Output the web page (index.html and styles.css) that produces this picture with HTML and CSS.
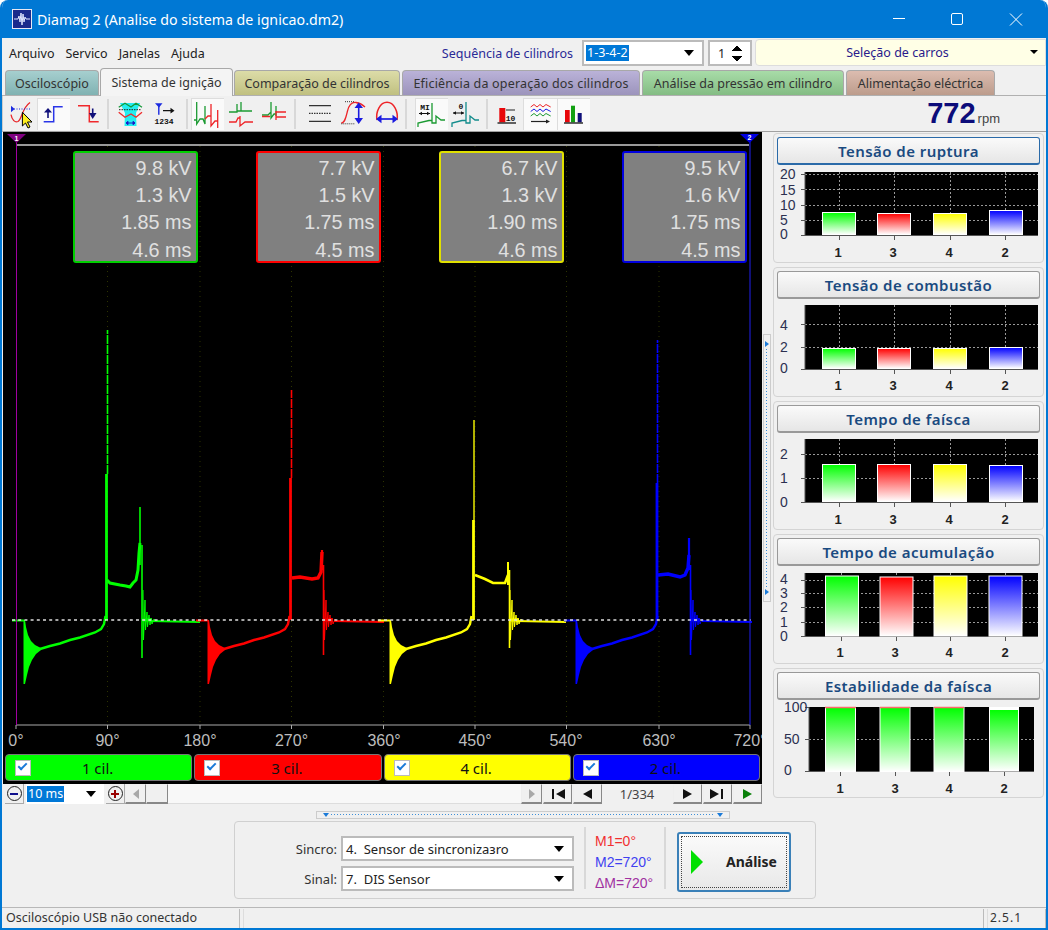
FILE: index.html
```html
<!DOCTYPE html>
<html>
<head>
  <title>Diamag 2</title>
  <link rel="stylesheet" href="styles.css">
</head>
<body>
<div class="window">
  <div class="titlebar">
    <svg class="app-icon" width="20" height="20" viewBox="0 0 20 20">
      <rect x="0.5" y="0.5" width="19" height="19" fill="#1a2a8c" stroke="#e8e8f4"/>
      <path d="M2 10H6L7 7L8 13L9 4L10 16L11 5L12 13L13 8L14 10H18" fill="none" stroke="#dfe6ff" stroke-width="1"/>
    </svg>
    <span class="title">Diamag 2 (Analise do sistema de ignicao.dm2)</span>
    <div class="win-btns">
      <svg width="58" height="38" viewBox="0 0 58 38"><path d="M22 18.5H34" stroke="#fff"/></svg>
      <svg width="58" height="38" viewBox="0 0 58 38"><rect x="22.5" y="13.5" width="11" height="11" rx="1.5" fill="none" stroke="#fff"/></svg>
      <svg width="58" height="38" viewBox="0 0 58 38"><path d="M23 13.5L35 25.5M35 13.5L23 25.5" stroke="#fff"/></svg>
    </div>
  </div>

  <div class="menubar">
    <span>Arquivo</span><span>Servico</span><span>Janelas</span><span>Ajuda</span>
    <span class="seq-label">Sequência de cilindros</span>
    <div class="field seq-field"><span class="sel">1-3-4-2</span><i class="caret"></i></div>
    <div class="field spin-field"><span>1</span><i class="spin-arrows"></i></div>
    <div class="car-select"><span>Seleção de carros</span><i class="caret small"></i></div>
  </div>

  <div class="tabs">
    <div class="tab t-scope">Osciloscópio</div>
    <div class="tab active">Sistema de ignição</div>
    <div class="tab t-compare">Comparação de cilindros</div>
    <div class="tab t-eff">Eficiência da operação dos cilindros</div>
    <div class="tab t-press">Análise da pressão em cilindro</div>
    <div class="tab t-power">Alimentação eléctrica</div>
  </div>

  <div class="toolbar">
    <div class="tb"><svg viewBox="0 0 30 30">
      <path d="M6 15.7C7 21 10 24 13 22.5C17 20 17 9 25 3.5" fill="none" stroke="#e8262a" stroke-width="1.3"/>
      <path d="M6 6.7L9.6 10L6 13.3Z" fill="#1a2ae0"/><path d="M9 10H26" stroke="#1a2ae0" stroke-dasharray="1 1.5"/>
      <path d="M17.4 13.3V27L20.5 24L23 29L25 28L22.5 23L27 23Z" fill="#ffef20" stroke="#000"/>
    </svg></div>
    <div class="tb on"><svg viewBox="0 0 30 30">
      <path d="M5.7 22.7H15.7V7.7H24.7" fill="none" stroke="#2a36e8" stroke-width="1.5"/>
      <path d="M10 9L14 13.5H6Z" fill="#10107a"/><path d="M10 13V19" stroke="#10107a" stroke-width="1.6"/>
    </svg></div>
    <div class="tb"><svg viewBox="0 0 30 30">
      <path d="M6 6.7H17.3V22.7H26.7" fill="none" stroke="#f0282c" stroke-width="1.5"/>
      <path d="M20.7 20L24.5 14H17Z" fill="#10107a"/><path d="M20.7 9.5V15" stroke="#10107a" stroke-width="1.6"/>
    </svg></div>
    <i class="tb-sep s1"></i>
    <div class="tb"><svg viewBox="0 0 30 30">
      <path d="M5 4H25L21 14L21.5 27H9.5L10 14Z" fill="#22eef0"/>
      <path d="M3.7 8.3L10 4.3L16 8L21 4.3L27 8.3" fill="none" stroke="#159a3a" stroke-width="1.3"/>
      <path d="M4 10.7H26" stroke="#222" stroke-dasharray="1.5 1"/>
      <path d="M3.7 13.3L10 18.3L16 15L21 18.3L27 13.3" fill="none" stroke="#ee2a2a" stroke-width="1.3"/>
      <path d="M11 24H20M11 24L13 22.3V25.7ZM20 24L18 22.3V25.7Z" fill="#1a1ac8" stroke="#1a1ac8"/>
    </svg></div>
    <div class="tb"><svg viewBox="0 0 30 30">
      <path d="M6 4.3H13.5L10 8.5Z" fill="#1a2ae0"/><path d="M9.8 7V15.7" stroke="#1a2ae0" stroke-width="1.4"/>
      <path d="M14 11.7H23" stroke="#111" stroke-width="1.2"/><path d="M21.5 8.8L25.5 11.7L21.5 14.6Z" fill="#111"/>
      <text x="15" y="25" class="ico-txt">1234</text>
    </svg></div>
    <i class="tb-sep s2"></i>
    <div class="tb on"><svg viewBox="0 0 30 30">
      <path d="M2 21H4.7V3V25L8 20H11L13 25V7" fill="none" stroke="#1b9a32" stroke-width="1.3"/>
      <path d="M13 20L16 17H19V5V27L23 22H25.7V11V29" fill="none" stroke="#ee2428" stroke-width="1.3"/>
    </svg></div>
    <div class="tb"><svg viewBox="0 0 30 30">
      <path d="M3 13H11V5V12H15V3V12H26" fill="none" stroke="#1b9a32" stroke-width="1.3"/>
      <path d="M3 23H10L12 19H14V17V27L19 23H27" fill="none" stroke="#ee2428" stroke-width="1.3"/>
    </svg></div>
    <div class="tb"><svg viewBox="0 0 30 30">
      <path d="M3 16H9L12 13V3V19L15 15H17V7V17" fill="none" stroke="#1b9a32" stroke-width="1.3"/>
      <path d="M3 17.5H11M17 12V21M17 13H27M17 18H27" fill="none" stroke="#ee2428" stroke-width="1.3"/>
    </svg></div>
    <i class="tb-sep s3"></i>
    <div class="tb"><svg viewBox="0 0 30 30">
      <path d="M4 6.7H26M4 22.3H26" stroke="#333" stroke-width="1.3"/><path d="M4 14.3H26" stroke="#333" stroke-width="1.3" stroke-dasharray="1.5 1"/>
    </svg></div>
    <div class="tb"><svg viewBox="0 0 30 30">
      <path d="M3.3 24C7 24 8 18 9.5 12C11 6 14 3 18 3.5C22 4 25 6 27 8" fill="none" stroke="#ee2428" stroke-width="1.3"/>
      <path d="M7 2.7H17M3.3 24.8H17" stroke="#333" stroke-dasharray="1 1"/>
      <path d="M20.7 8V20" stroke="#1a1ae0" stroke-width="1.6"/><path d="M20.7 3.5L25 9H16.5ZM20.7 25L25 19H16.5Z" fill="#1a1ae0"/>
    </svg></div>
    <div class="tb"><svg viewBox="0 0 30 30">
      <path d="M5 21C3.5 13 8 3.3 15 3.3C22 3.3 26.5 13 25 21" fill="none" stroke="#ee2428" stroke-width="1.5"/>
      <path d="M8 20H22" stroke="#1a1ae0" stroke-width="1.7"/><path d="M4 20L9.5 15.8V24.2ZM26 20L20.5 15.8V24.2Z" fill="#1a1ae0"/>
    </svg></div>
    <i class="tb-sep s4"></i>
    <div class="tb on g5"><svg viewBox="0 0 30 30">
      <text x="9" y="11" class="ico-txt">MI</text>
      <path d="M3 14.5H14" stroke="#111"/><path d="M3 14.5L6 12.7V16.3ZM14 14.5L11 12.7V16.3Z" fill="#111"/>
      <path d="M2 28V24L13 21.5H16V4V24H20V17L25 21L29 21" fill="none" stroke="#1b9a32" stroke-width="1.3"/>
    </svg></div>
    <div class="tb"><svg viewBox="0 0 30 30">
      <text x="11" y="10" class="ico-txt">0</text>
      <path d="M3 14H14" stroke="#111"/><path d="M3 14L6 12.2V15.8ZM14 14L11 12.2V15.8Z" fill="#111"/>
      <path d="M2 28V24L12 21.5H16V3V24H20V17L25 21H29" fill="none" stroke="#128c8c" stroke-width="1.3"/>
    </svg></div>
    <i class="tb-sep s5"></i>
    <div class="tb"><svg viewBox="0 0 30 30">
      <rect x="8.3" y="9" width="6" height="14.3" fill="#e8060a"/>
      <path d="M15 11H24" stroke="#222"/><text x="19.5" y="21.5" class="ico-txt">10</text>
      <path d="M6.5 24H25" stroke="#111" stroke-width="1.3"/>
    </svg></div>
    <div class="tb on"><svg viewBox="0 0 30 30">
      <path d="M5.7 8L9 5.5L12 8L15 5.5L18 8L21 5.5L25.7 8" fill="none" stroke="#ee2428"/>
      <path d="M5.7 12.5L9 10L12 12.5L15 10L18 12.5L21 10L25.7 12.5" fill="none" stroke="#1a1ae0"/>
      <path d="M5.7 17L9 14.5L12 17L15 14.5L18 17L21 14.5L25.7 17" fill="none" stroke="#1b9a32"/>
      <path d="M6 22.5H22" stroke="#222" stroke-width="1.2"/><path d="M21 20.5L25 22.5L21 24.5Z" fill="#222"/>
    </svg></div>
    <div class="tb on"><svg viewBox="0 0 30 30">
      <rect x="7" y="11" width="4.7" height="12.3" fill="#e8060a"/>
      <rect x="13" y="6.7" width="4" height="16.6" fill="#12a012"/>
      <rect x="19.7" y="14" width="4" height="9.3" fill="#10107a"/>
      <path d="M6 24H25" stroke="#111" stroke-width="1.3"/>
    </svg></div>
    <div class="rpm"><b>772</b><span>rpm</span></div>
  </div>

  <div class="workspace">
    <div class="left-col">
      <div class="scope">
        <svg class="scope-svg" width="759" height="622" viewBox="3 132 759 622">
          <defs>
            <g id="base">
              <path stroke="none" d="M23.5 620H25L26 627L28 635L31 641L35 645L41 648V650L36 654L32 660L29 667L27 675L25 684H23.5Z"/>
              <path fill="none" stroke-width="2" d="M12 620.5H24"/>
              <path fill="none" stroke-width="2.4" d="M40 649L50 646L52 645.500L60 643.500L70 640L80 637.500L95 632.500L101 629L104 624L105.500 616"/>
              <path fill="none" stroke-width="2" d="M150 621L175 621.500L200 622"/>
            </g>
            <g id="osc" fill="none">
              <path stroke-width="1" d="M0 590L0.5 640L2 600L2.5 630L4 612L4.5 627L6 615L7 625L8 618L9 624L11 619L13 622"/>
              <path stroke-width="3" d="M-1 620H9"/>
            </g>
          </defs>
          <g class="grid90">
            <path d="M107.5 146V725M200 146V725M291.5 146V725M383.5 146V725M475 146V725M566.5 146V725M659 146V725"/>
          </g>
          <path d="M17 145H749" stroke="#ccc" stroke-width="1.5"/>
          <path d="M16 725H750M16 725V729M107.5 725V729M200 725V729M291.5 725V729M383.5 725V729M475 725V729M566.5 725V729M659 725V729M750 725V729" stroke="#aaa" fill="none"/>

          <use href="#base" fill="#0f0" stroke="#0f0"/>
          <use href="#osc" x="143" stroke="#0f0"/>
          <path d="M106.5 620V474" stroke="#0f0" stroke-width="2.8"/>
          <path d="M107.5 474V330" stroke="#0f0" stroke-width="1.6" stroke-dasharray="9 1"/>
          <path d="M107 580L110 583L120 585L126 586L130 587L133 583L136 580L138 570L139 553L140 543" fill="none" stroke="#0f0" stroke-width="3"/>
          <path d="M140 565V507" stroke="#0f0" stroke-width="1.6"/>
          <path d="M142 545V658" stroke="#0f0" stroke-width="1.6"/>

          <use href="#base" x="184" fill="#f00" stroke="#f00"/>
          <use href="#osc" x="324" y="0" stroke="#f00"/>
          <path d="M290.5 620V478" stroke="#f00" stroke-width="2.8"/>
          <path d="M291.5 478V390" stroke="#f00" stroke-width="1.6" stroke-dasharray="9 1"/>
          <path d="M292 578L300 577L312 579L318 578L321 572L322 552" fill="none" stroke="#f00" stroke-width="3.4"/>
          <path d="M322 570V550" stroke="#f00" stroke-width="2.2"/>
          <path d="M323.5 565V655" stroke="#f00" stroke-width="1.6"/>

          <use href="#base" x="366" fill="#ff0" stroke="#ff0"/>
          <use href="#osc" x="510" stroke="#ff0"/>
          <path d="M473.5 620V520" stroke="#ff0" stroke-width="2.8"/>
          <path d="M474 520V420" stroke="#dd0" stroke-width="1.6"/>
          <path d="M475 575L485 579L493 583L505 583L508 575" fill="none" stroke="#ff0" stroke-width="2.6"/>
          <path d="M508 585V562" stroke="#ff0" stroke-width="2"/>
          <path d="M509.5 570V648" stroke="#ff0" stroke-width="1.6"/>

          <use href="#base" x="552" fill="#00f" stroke="#00f"/>
          <use href="#osc" x="691" stroke="#00f"/>
          <path d="M657 620V483" stroke="#00f" stroke-width="2.8"/>
          <path d="M657.5 483V340" stroke="#00f" stroke-width="1.6" stroke-dasharray="9 1"/>
          <path d="M658 575L668 574L680 577L685 575L688 568L689 555" fill="none" stroke="#00f" stroke-width="3.4"/>
          <path d="M689 570V538" stroke="#00f" stroke-width="2.2"/>
          <path d="M690.5 565V655" stroke="#00f" stroke-width="1.6"/>

          <path d="M12 620H751" stroke="#ddd" stroke-width="1.5" stroke-dasharray="3 3.2"/>
          <path d="M16.5 136V725" stroke="#a000a0"/>
          <path d="M750 136V725" stroke="#2020f0"/>
          <path d="M7 134H26L16.5 143Z" fill="#800080"/>
          <path d="M740 134H759L749.5 143Z" fill="#0000e0"/>
          <text x="16.5" y="141" class="mark">1</text>
          <text x="749.5" y="140" class="mark">2</text>
          <g class="deg">
            <text x="16" y="746">0°</text><text x="107.5" y="746">90°</text><text x="200" y="746">180°</text>
            <text x="291.5" y="746">270°</text><text x="384" y="746">360°</text><text x="475" y="746">450°</text>
            <text x="566" y="746">540°</text><text x="659" y="746">630°</text><text x="750" y="746">720°</text>
          </g>
        </svg>
        <div class="info-row">
          <div class="info i-g"><span>9.8 kV</span><span>1.3 kV</span><span>1.85 ms</span><span>4.6 ms</span></div>
          <div class="info i-r"><span>7.7 kV</span><span>1.5 kV</span><span>1.75 ms</span><span>4.5 ms</span></div>
          <div class="info i-y"><span>6.7 kV</span><span>1.3 kV</span><span>1.90 ms</span><span>4.6 ms</span></div>
          <div class="info i-b"><span>9.5 kV</span><span>1.6 kV</span><span>1.75 ms</span><span>4.5 ms</span></div>
        </div>
      </div>
      <div class="cyl-row">
        <div class="cyl c-g"><i class="check"></i><span>1 cil.</span></div>
        <div class="cyl c-r"><i class="check"></i><span>3 cil.</span></div>
        <div class="cyl c-y"><i class="check"></i><span>4 cil.</span></div>
        <div class="cyl c-b"><i class="check"></i><span>2 cil.</span></div>
      </div>
      <div class="nav-row">
        <div class="round-btn"><i class="minus"></i></div>
        <div class="zoom-field"><span class="sel">10 ms</span><i class="caret"></i></div>
        <div class="round-btn"><i class="plus"></i></div>
        <div class="nb sb"><i class="tri-l gray"></i></div>
        <div class="nb thumb"></div>
        <div class="track"></div>
        <div class="nb sb"><i class="tri-r gray"></i></div>
        <div class="nb nv"><i class="bar"></i><i class="tri-l"></i></div>
        <div class="nb nv"><i class="tri-l"></i></div>
        <div class="page-no">1/334</div>
        <div class="nb nv"><i class="tri-r"></i></div>
        <div class="nb nv"><i class="tri-r"></i><i class="bar"></i></div>
        <div class="nb nv"><i class="tri-r green"></i></div>
      </div>
    </div>

    <div class="vsplit"><i class="tip-r"></i><i class="dots-v"></i><i class="tip-r"></i></div>

    <div class="charts">
      <div class="panel">
        <div class="head focus">Tensão de ruptura</div>
        <svg width="264" height="90" viewBox="777 170 264 90">
          <defs>
            <linearGradient id="gg" x1="0" y1="0" x2="0" y2="1"><stop offset="0" stop-color="#0f0"/><stop offset="1" stop-color="#fff"/></linearGradient>
            <linearGradient id="gr" x1="0" y1="0" x2="0" y2="1"><stop offset="0" stop-color="#f00"/><stop offset="1" stop-color="#fff"/></linearGradient>
            <linearGradient id="gy" x1="0" y1="0" x2="0" y2="1"><stop offset="0" stop-color="#ff0"/><stop offset="1" stop-color="#fff"/></linearGradient>
            <linearGradient id="gb" x1="0" y1="0" x2="0" y2="1"><stop offset="0" stop-color="#00f"/><stop offset="1" stop-color="#fff"/></linearGradient>
          </defs>
          <rect x="805" y="172" width="233" height="63" fill="#000"/>
          <path class="gl" d="M805 174.500H1038M805 189.500H1038M805 205.500H1038M805 220.500H1038M839.500 172V235M894.500 172V235M950.500 172V235M1005.500 172V235"/>
          <path class="ax" d="M805 172V235.500H1038"/>
          <path class="tk" d="M801 174.500H805M801 189.500H805M801 205.500H805M801 220.500H805M801 235.500H805M839.500 236V240M894.500 236V240M950.500 236V240M1005.500 236V240"/>
          <rect class="bar-g" x="822.500" y="212.500" width="33" height="22"/>
          <rect class="bar-r" x="877.500" y="213.500" width="33" height="21"/>
          <rect class="bar-y" x="933.500" y="213.500" width="33" height="21"/>
          <rect class="bar-b" x="989.500" y="210.500" width="33" height="24"/>
          <g class="yl"><text x="780" y="179">20</text><text x="780" y="194.500">15</text><text x="780" y="210">10</text><text x="780" y="225">5</text><text x="780" y="239">0</text></g>
          <g class="xl"><text x="838" y="257">1</text><text x="893" y="257">3</text><text x="949" y="257">4</text><text x="1005" y="257">2</text></g>
        </svg>
      </div>
      <div class="panel">
        <div class="head">Tensão de combustão</div>
        <svg width="264" height="90" viewBox="777 304 264 90">
          <rect x="805" y="305" width="233" height="64" fill="#000"/>
          <path class="gl" d="M805 324.500H1038M805 347.500H1038M839.500 305V369M894.500 305V369M950.500 305V369M1005.500 305V369"/>
          <path class="ax" d="M805 305V369.500H1038"/>
          <path class="tk" d="M801 324.500H805M801 347.500H805M801 369.500H805M839.500 370V374M894.500 370V374M950.500 370V374M1005.500 370V374"/>
          <rect class="bar-g" x="822.500" y="348.500" width="33" height="20"/>
          <rect class="bar-r" x="877.500" y="348.500" width="33" height="20"/>
          <rect class="bar-y" x="933.500" y="348.500" width="33" height="20"/>
          <rect class="bar-b" x="989.500" y="347.500" width="33" height="21"/>
          <g class="yl"><text x="780" y="329.500">4</text><text x="780" y="352">2</text><text x="780" y="373">0</text></g>
          <g class="xl"><text x="838" y="390">1</text><text x="893" y="390">3</text><text x="949" y="390">4</text><text x="1005" y="390">2</text></g>
        </svg>
      </div>
      <div class="panel">
        <div class="head">Tempo de faísca</div>
        <svg width="264" height="90" viewBox="777 438 264 90">
          <rect x="805" y="439" width="233" height="63" fill="#000"/>
          <path class="gl" d="M805 454.500H1038M805 478.500H1038M839.500 439V502M894.500 439V502M950.500 439V502M1005.500 439V502"/>
          <path class="ax" d="M805 439V502.500H1038"/>
          <path class="tk" d="M801 454.500H805M801 478.500H805M801 502.500H805M839.500 503V507M894.500 503V507M950.500 503V507M1005.500 503V507"/>
          <rect class="bar-g" x="822.500" y="464.500" width="33" height="37"/>
          <rect class="bar-r" x="877.500" y="464.500" width="33" height="37"/>
          <rect class="bar-y" x="933.500" y="464.500" width="33" height="37"/>
          <rect class="bar-b" x="989.500" y="465.500" width="33" height="36"/>
          <g class="yl"><text x="780" y="459">2</text><text x="780" y="483">1</text><text x="780" y="507">0</text></g>
          <g class="xl"><text x="838" y="524">1</text><text x="893" y="524">3</text><text x="949" y="524">4</text><text x="1005" y="524">2</text></g>
        </svg>
      </div>
      <div class="panel">
        <div class="head">Tempo de acumulação</div>
        <svg width="264" height="90" viewBox="777 571 264 90">
          <rect x="805" y="573" width="233" height="63" fill="#000"/>
          <path class="gl" d="M805 580.500H1038M805 593.500H1038M805 607.500H1038M805 622.500H1038M841.500 573V636M896.500 573V636M950.500 573V636M1005.500 573V636"/>
          <path class="ax" d="M805 573V636.500H1038"/>
          <path class="tk" d="M801 580.500H805M801 593.500H805M801 607.500H805M801 622.500H805M801 636.500H805M841.500 637V641M896.500 637V641M950.500 637V641M1005.500 637V641"/>
          <rect class="bar-g" x="825.500" y="576" width="33" height="60"/>
          <rect class="bar-r" x="880" y="577" width="33" height="59"/>
          <rect class="bar-y" x="934" y="576" width="33" height="60"/>
          <rect class="bar-b" x="989" y="576" width="33" height="60"/>
          <g class="yl"><text x="780" y="584">4</text><text x="780" y="598">3</text><text x="780" y="612">2</text><text x="780" y="627">1</text><text x="780" y="641">0</text></g>
          <g class="xl"><text x="840" y="657">1</text><text x="895" y="657">3</text><text x="949" y="657">4</text><text x="1005" y="657">2</text></g>
        </svg>
      </div>
      <div class="panel">
        <div class="head">Estabilidade da faísca</div>
        <svg width="264" height="90" viewBox="777 705 264 90">
          <rect x="809" y="707" width="225" height="64" fill="#000"/>
          <path class="gl" d="M809 739.500H1034"/>
          <path class="ax" d="M809 707V771.500H1034"/>
          <path class="tk" d="M805 707.500H809M805 739.500H809M805 771.500H809M840.500 772V776M895.500 772V776M949.500 772V776M1004.500 772V776"/>
          <rect class="bar-g" x="825.500" y="707.500" width="30" height="64"/>
          <rect class="bar-g" x="880" y="707.500" width="30" height="64"/>
          <rect class="bar-g" x="934" y="707.500" width="30" height="64"/>
          <rect x="989" y="707" width="30" height="64" fill="#fff"/>
          <rect class="bar-g" x="989.500" y="709.500" width="29" height="61.500"/>
          <path d="M825 707.500H856M880 707.500H910M934 707.500H964" stroke="#ff6a6a" stroke-width="1.500"/>
          <g class="yl"><text x="784" y="712">100</text><text x="784" y="744">50</text><text x="784" y="775">0</text></g>
          <g class="xl"><text x="840" y="793">1</text><text x="895" y="793">3</text><text x="949" y="793">4</text><text x="1004" y="793">2</text></g>
        </svg>
      </div>
    </div>
  </div>

  <div class="hsplit"><i class="tip-d"></i><i class="dots-h"></i><i class="tip-d"></i></div>

  <div class="bottom">
    <div class="group">
      <div class="sensors">
        <div class="sensor"><label>Sincro:</label><div class="field sensor-field"><span>4.&nbsp; Sensor de sincronizaзro</span><i class="caret"></i></div></div>
        <div class="sensor"><label>Sinal:</label><div class="field sensor-field"><span>7.&nbsp; DIS Sensor</span><i class="caret"></i></div></div>
      </div>
      <div class="markers">
        <span class="m1">M1=0°</span>
        <span class="m2">M2=720°</span>
        <span class="m3">ΔM=720°</span>
      </div>
      <div class="analyse">
        <div class="analyse-in"><i class="play"></i><b>Análise</b></div>
      </div>
    </div>
  </div>

  <div class="statusbar">
    <div class="st st1">Osciloscópio USB não conectado</div>
    <div class="st st2"></div>
    <div class="st st3">2.5.1</div>
  </div>
</div>
</body>
</html>
```

FILE: styles.css
```css
html, body {
  margin: 0;
  padding: 0;
  background: #fff;
}
body {
  font-family: "Noto Sans", "Liberation Sans", sans-serif;
  font-size: 12.5px;
  color: #222;
}
.window {
  width: 1048px;
  height: 930px;
  box-sizing: border-box;
  border: 2px solid #0078d4;
  border-top: none;
  border-radius: 8px 8px 0 0;
  background: #f0f0f0;
  display: flex;
  flex-direction: column;
  overflow: hidden;
}
.titlebar {
  height: 38px;
  flex: none;
  background: #0078d4;
  color: #fff;
  display: flex;
  align-items: center;
  padding-left: 10px;
  margin: 0 -2px;
}
.app-icon {
  margin: 0 5px 0 2px;
}
.title {
  font-size: 14.2px;
}
.win-btns {
  margin-left: auto;
  display: flex;
  padding-right: 3px;
}

.menubar {
  height: 30px;
  flex: none;
  display: flex;
  align-items: center;
  gap: 11px;
  padding: 0 0 0 7px;
}
.seq-label {
  margin-left: auto;
  margin-right: -1px;
  color: #2a2a96;
}
.field {
  background: #fff;
  border: 2px solid #bbb;
  box-sizing: border-box;
  display: flex;
  align-items: center;
  position: relative;
}
.sel {
  background: #0078d7;
  color: #fff;
  padding: 0 1px;
  line-height: 16px;
}
.caret {
  width: 0;
  height: 0;
  border-left: 5px solid transparent;
  border-right: 5px solid transparent;
  border-top: 6px solid #000;
  margin-left: auto;
}
.caret.small {
  border-left-width: 4px;
  border-right-width: 4px;
  border-top-width: 4px;
  margin-right: 7px;
}
.seq-field {
  width: 122px;
  height: 26px;
  padding: 0 8px 0 2px;
  margin-right: -7px;
  margin-left: -1px;
}
.spin-field {
  width: 44px;
  height: 26px;
  padding: 0 8px;
}
.spin-arrows {
  margin-left: auto;
  width: 10px;
  height: 17px;
  background:
    linear-gradient(to bottom right, transparent 50%, #000 50%) 0 0 / 5px 6px no-repeat,
    linear-gradient(to bottom left, transparent 50%, #000 50%) 5px 0 / 5px 6px no-repeat,
    linear-gradient(to top right, transparent 50%, #000 50%) 0 11px / 5px 6px no-repeat,
    linear-gradient(to top left, transparent 50%, #000 50%) 5px 11px / 5px 6px no-repeat;
}
.car-select {
  width: 291px;
  height: 27px;
  box-sizing: border-box;
  margin-left: -8px;
  margin-top: -2px;
  background: #ffffe6;
  border: 1px solid #ddd;
  border-radius: 4px 0 0 4px;
  display: flex;
  align-items: center;
  color: #2a1a8a;
}
.car-select span {
  flex: 1;
  text-align: center;
  padding-left: 9px;
}

.tabs {
  height: 28px;
  flex: none;
  display: flex;
  align-items: flex-end;
  gap: 2px;
  padding-left: 3px;
  border-bottom: 1px solid #b0b0b0;
  box-sizing: border-box;
}
.tab {
  height: 25px;
  box-sizing: border-box;
  flex: none;
  display: flex;
  align-items: center;
  justify-content: center;
  border: 1px solid #a8a8a8;
  border-bottom: none;
  border-radius: 4px 4px 0 0;
  white-space: nowrap;
  color: #333;
}
.tab.active {
  height: 28px;
  width: 133px;
  background: #f4f4f4;
  margin: 0 -1px -1px;
  position: relative;
}
.t-scope { width: 94px; background: linear-gradient(#a6cfcf, #80b2b2); }
.t-compare { width: 166px; background: linear-gradient(#dcdca8, #c0c080); }
.t-eff { width: 238px; letter-spacing: 0.2px; background: linear-gradient(#bab2d8, #9c94bc); }
.t-press { width: 202px; background: linear-gradient(#a8dca8, #84bc84); }
.t-power { width: 149px; background: linear-gradient(#dcbcb0, #bc9c8c); }

.toolbar {
  height: 36px;
  flex: none;
  display: flex;
  align-items: center;
  box-sizing: border-box;
  border-bottom: 1px solid #a0a0a0;
  border-left: 1px solid #ccc;
  padding-left: 0;
}
.tb {
  width: 33.5px;
  height: 32px;
  flex: none;
  display: flex;
  align-items: center;
  justify-content: center;
}
.tb svg {
  width: 30px;
  height: 30px;
}
.tb.on {
  background: #fafafa;
  box-shadow: inset 1px 1px 0 #ddd;
}
.tb-sep {
  width: 2px;
  height: 30px;
  flex: none;
  background: #d8d8d8;
  margin: 0 3px;
}
.tb-sep.s1 { margin: 0 5px 0 3px; }
.tb-sep.s2 { margin: 0 3px 0 5px; }
.tb-sep.s3 { margin: 0 7px 0 3px; }
.tb-sep.s4 { margin: 0 8px 0 1px; }
.tb-sep.s5 { margin: 0 2px 0 4px; }
.ico-txt {
  font-family: "Liberation Mono", monospace;
  font-size: 8px;
  font-weight: bold;
  text-anchor: middle;
  fill: #111;
}
.rpm {
  margin-left: auto;
  padding-right: 46px;
  display: flex;
  align-items: baseline;
  font-family: "Liberation Sans", sans-serif;
  color: #444;
}
.rpm b {
  font-size: 29px;
  color: #0c0c7a;
  margin-right: 2px;
}
.rpm span {
  font-size: 13px;
}

.workspace {
  height: 672px;
  flex: none;
  display: flex;
}
.left-col {
  width: 759px;
  margin-left: 1px;
  display: flex;
  flex-direction: column;
}
.scope {
  width: 759px;
  height: 622px;
  background: #000;
  position: relative;
  flex: none;
}
.scope-svg {
  position: absolute;
  left: 0;
  top: 0;
}
.grid90 path {
  stroke: #2c3300;
  stroke-dasharray: 1 4;
  fill: none;
}
.mark {
  font: bold 7px "Liberation Sans", sans-serif;
  fill: #fff;
  text-anchor: middle;
}
.deg text {
  font: 16px "Liberation Sans", sans-serif;
  fill: #bdbdbd;
  text-anchor: middle;
}
.info-row {
  position: absolute;
  left: 70px;
  top: 19px;
  display: flex;
  gap: 58px;
}
.info {
  width: 125px;
  height: 112px;
  box-sizing: border-box;
  background: #808080;
  border: 2px solid;
  border-radius: 3px;
  padding: 1.5px 4.5px 0 0;
  display: flex;
  flex-direction: column;
  align-items: flex-end;
  font: 19.8px/27.4px "Liberation Sans", sans-serif;
  color: #e0e0e0;
}
.i-g { border-color: #00d000; }
.i-r { border-color: #f00; }
.i-y { border-color: #e0e000; }
.i-b { border-color: #0000e0; }

.cyl-row {
  height: 30px;
  background: #000;
  flex: none;
  display: flex;
  gap: 2px;
  padding: 0 2px 3px;
  box-sizing: border-box;
}
.cyl {
  flex: 1;
  height: 27px;
  box-sizing: border-box;
  border: 1px solid #777;
  border-radius: 4px;
  display: flex;
  align-items: center;
  font-size: 15px;
  color: #111;
  padding-left: 9px;
}
.cyl span {
  flex: 1;
  text-align: center;
  padding-right: 27px;
}
.c-g { background: #0f0; }
.c-r { background: #f00; }
.c-y { background: #ff0; }
.c-b { background: #00f; }
.check {
  width: 16px;
  height: 16px;
  box-sizing: border-box;
  flex: none;
  background: #fff;
  border: 1px solid #bbb;
  position: relative;
}
.check::after {
  content: "";
  position: absolute;
  left: 2px;
  top: 2px;
  width: 9px;
  height: 5px;
  border-left: 2.5px solid #1a7ad8;
  border-bottom: 2.5px solid #1a7ad8;
  transform: rotate(-45deg);
  box-sizing: border-box;
}

.nav-row {
  height: 20px;
  flex: none;
  display: flex;
  align-items: stretch;
  margin-left: 2px;
}
.round-btn {
  width: 19px;
  flex: none;
  display: flex;
  align-items: center;
  justify-content: center;
  border-right: 1px solid #aaa;
  border-bottom: 1px solid #aaa;
  box-sizing: border-box;
}
.round-btn i {
  width: 13px;
  height: 13px;
  border: 1px solid #222;
  border-radius: 50%;
  position: relative;
  display: block;
}
.minus::after, .plus::after, .plus::before {
  content: "";
  position: absolute;
  left: 2.5px;
  top: 5.5px;
  width: 8px;
  height: 2px;
  background: #10108c;
}
.plus::after { background: #900; }
.plus::before { background: #900; transform: rotate(90deg); }
.zoom-field {
  width: 78px;
  flex: none;
  background: #fff;
  display: flex;
  align-items: center;
  margin: 0 2px 0 2px;
  padding: 0 8px 0 1px;
  box-sizing: border-box;
}
.nb {
  background: #f0f0f0;
  border-top: 1px solid #eee;
  border-left: 1px solid #eee;
  border-right: 1px solid #888;
  border-bottom: 2px solid #888;
  box-sizing: border-box;
  display: flex;
  align-items: center;
  justify-content: center;
  flex: none;
}
.sb { width: 21px; }
.thumb { width: 22px; }
.nv { width: 29px; margin-left: 1px; }
.track {
  flex: 1;
  background: #f8f8f8;
  border-bottom: 1px solid #ddd;
}
.page-no {
  width: 70px;
  flex: none;
  text-align: center;
  color: #444;
  font-size: 13px;
  line-height: 20px;
}
.tri-l, .tri-r {
  width: 0;
  height: 0;
  border-top: 5px solid transparent;
  border-bottom: 5px solid transparent;
}
.tri-l { border-right: 9px solid #111; }
.tri-r { border-left: 9px solid #111; }
.tri-l.gray { border-right-color: #a8a8a8; border-right-width: 6px; }
.tri-r.gray { border-left-color: #a8a8a8; border-left-width: 6px; }
.tri-r.green { border-left-color: #0a800a; }
.bar {
  width: 2px;
  height: 10px;
  background: #111;
  margin: 0 2px;
}

.vsplit {
  width: 8px;
  height: 268px;
  flex: none;
  align-self: center;
  margin: 0 2px 0 1px;
  box-sizing: border-box;
  border: 1px solid #ccc;
  display: flex;
  flex-direction: column;
  align-items: flex-start;
  padding: 6px 0;
  gap: 2px;
}
.tip-r {
  flex: none;
  margin-left: 1px;
  width: 0;
  height: 0;
  border-left: 4px solid #1a7ad8;
  border-top: 3px solid transparent;
  border-bottom: 3px solid transparent;
}
.dots-v {
  flex: 1;
  margin-left: 2px;
  width: 1px;
  background: repeating-linear-gradient(#3d8fd8 0 1px, transparent 1px 3px);
}

.charts {
  width: 271px;
  flex: none;
  display: flex;
  flex-direction: column;
  gap: 4px;
  padding-top: 1px;
}
.panel {
  height: 130px;
  box-sizing: border-box;
  border: 1px solid #d4d4d4;
  border-radius: 4px;
  padding: 3px 3px 0 3px;
  flex: none;
  display: flex;
  flex-direction: column;
  gap: 5px;
}
.panel:nth-child(3) {
  height: 129px;
}
.head {
  height: 28px;
  flex: none;
  box-sizing: border-box;
  border: 1px solid #999;
  border-bottom-width: 2px;
  border-radius: 3px;
  background: linear-gradient(#fafafa, #e6e6e6);
  color: #1a4a80;
  font-size: 15px;
  font-weight: 600;
  display: flex;
  align-items: center;
  justify-content: center;
  letter-spacing: 0.45px;
}
.head.focus {
  border-color: #2a6aa8;
}
.panel svg {
  flex: none;
  overflow: visible;
}
.gl {
  stroke: #999;
  stroke-dasharray: 2 2;
  fill: none;
}
.ax {
  stroke: #555;
  fill: none;
}
.tk {
  stroke: #555;
  fill: none;
}
.bar-g, .bar-r, .bar-y, .bar-b {
  stroke: #fff;
}
.bar-g { fill: url(#gg); }
.bar-r { fill: url(#gr); }
.bar-y { fill: url(#gy); }
.bar-b { fill: url(#gb); }
.yl text {
  font: 14px "Liberation Sans", sans-serif;
  fill: #2c3050;
}
.xl text {
  font: bold 13px "Liberation Sans", sans-serif;
  fill: #222;
  text-anchor: middle;
}

.hsplit {
  width: 414px;
  height: 8px;
  flex: none;
  margin: 7px 0 0 314px;
  box-sizing: border-box;
  border: 1px solid #ccc;
  display: flex;
  align-items: flex-start;
  padding: 1px 6px 0;
  gap: 2px;
}
.tip-d {
  flex: none;
  width: 0;
  height: 0;
  border-top: 4px solid #1a7ad8;
  border-left: 3px solid transparent;
  border-right: 3px solid transparent;
}
.dots-h {
  flex: 1;
  height: 1px;
  margin-top: 1px;
  background: repeating-linear-gradient(to right, #3d8fd8 0 1px, transparent 1px 3px);
}

.bottom {
  flex: none;
  height: 78px;
  margin-top: 2px;
  padding-left: 232px;
}
.group {
  width: 582px;
  height: 78px;
  box-sizing: border-box;
  border: 1px solid #d0d0d0;
  border-radius: 4px;
  display: flex;
  align-items: center;
}
.sensors {
  width: 339px;
  flex: none;
  display: flex;
  flex-direction: column;
  gap: 5px;
  padding-top: 7px;
}
.sensor {
  display: flex;
  align-items: center;
  justify-content: flex-end;
  gap: 4px;
}
.sensor label {
  color: #333;
  font-size: 13px;
}
.sensor-field {
  width: 233px;
  height: 25px;
  padding: 0 8px 0 3px;
  color: #222;
  font-size: 13px;
}
.markers {
  width: 82px;
  height: 62px;
  flex: none;
  box-sizing: border-box;
  margin: -4px 0 0 10px;
  padding: 4px 0 0 9px;
  border-left: 2px solid #d8d8d8;
  border-right: 2px solid #d8d8d8;
  display: flex;
  flex-direction: column;
  font: 14px/21px "Liberation Sans", sans-serif;
  white-space: nowrap;
}
.m1 { color: #f03030; }
.m2 { color: #4040f0; }
.m3 { color: #a030a0; }
.analyse {
  width: 114px;
  height: 60px;
  flex: none;
  box-sizing: border-box;
  margin: 3px 0 0 11px;
  border: 2px solid #3a80b8;
  border-radius: 3px;
  background: linear-gradient(#fbfbfb, #e8e8e8);
  padding: 2px;
}
.analyse-in {
  height: 100%;
  box-sizing: border-box;
  border: 1px dotted #444;
  display: flex;
  align-items: center;
  padding-left: 9px;
}
.play {
  width: 0;
  height: 0;
  border-left: 12px solid #00e000;
  border-top: 12px solid transparent;
  border-bottom: 12px solid transparent;
  margin-right: 23px;
}
.analyse-in b {
  font-size: 14px;
  color: #222;
}

.statusbar {
  height: 21px;
  flex: none;
  margin-top: 8px;
  border-top: 1px solid #b8b8b8;
  display: flex;
  gap: 3px;
  box-sizing: border-box;
  padding-top: 1px;
}
.st {
  border-right: 1px solid #bbb;
  border-left: 1px solid #ddd;
  padding-left: 4px;
  box-sizing: border-box;
  line-height: 18px;
  font-size: 12.5px;
  color: #333;
}
.st1 { width: 238px; border-left: none; }
.st2 { flex: 1; }
.st3 { width: 59px; letter-spacing: 1px; font-size: 12px; padding-left: 2px; }
```
